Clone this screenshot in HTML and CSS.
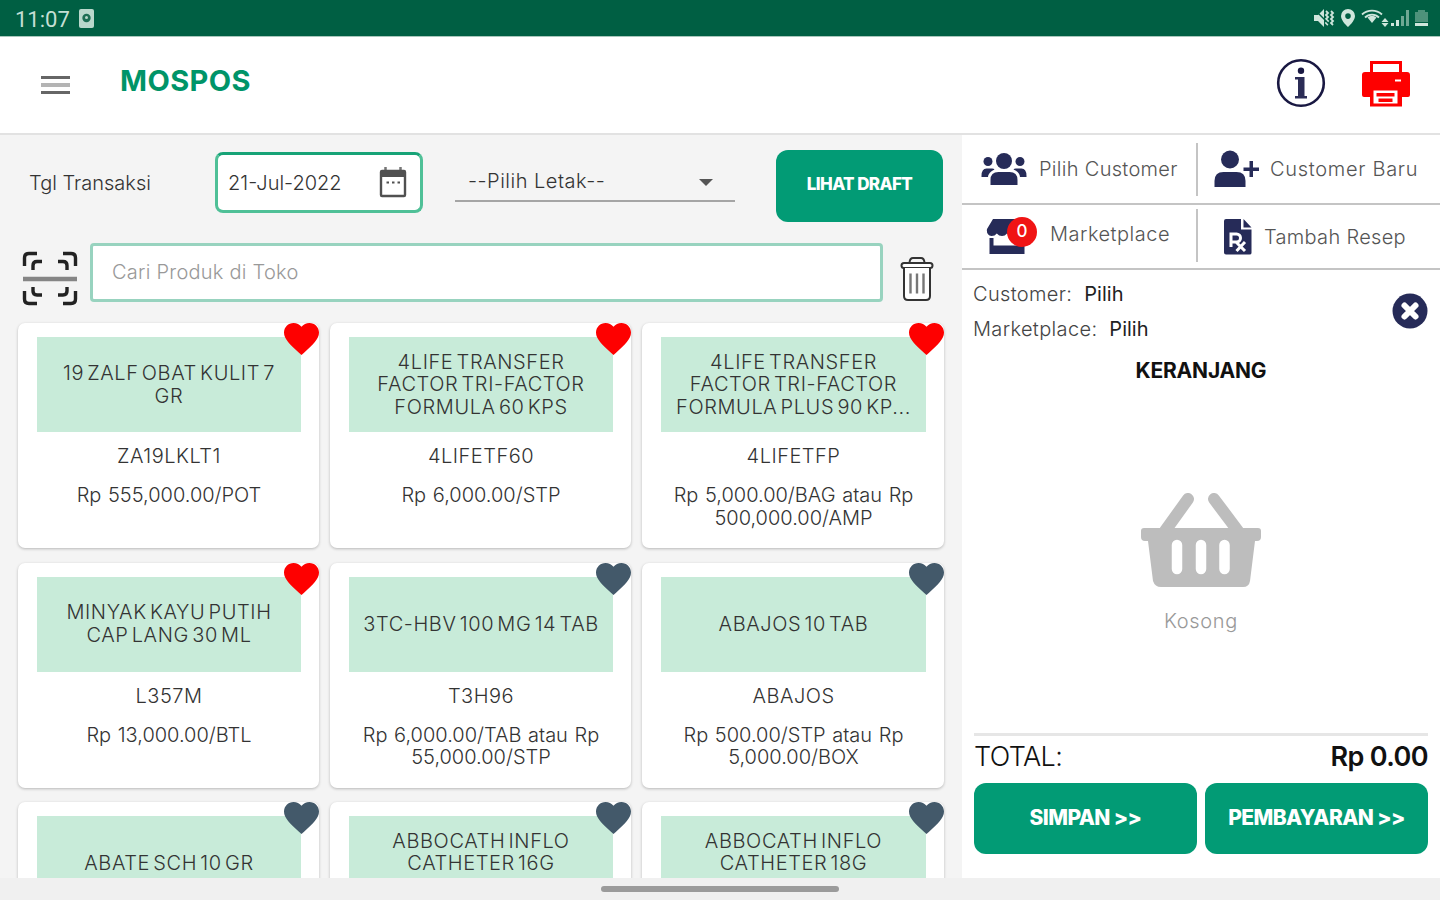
FILE: index.html
```html
<!DOCTYPE html>
<html lang="id">
	<head>
		<meta charset="utf-8">
		<title>MOSPOS</title>
		<link rel="stylesheet" href="styles.css">
	</head>
	<body>
		<svg class="defs">
			<symbol id="heart" viewBox="2 3 20 18.35" preserveAspectRatio="none">
				<path d="M12 21.35l-1.45-1.32C5.4 15.36 2 12.28 2 8.5 2 5.42 4.42 3 7.5 3c1.74 0 3.41.81 4.5 2.09C13.09 3.81 14.76 3 16.5 3 19.58 3 22 5.42 22 8.5c0 3.78-3.4 6.86-8.55 11.54L12 21.35z"/>
			</symbol>
		</svg>

		<div class="status">
			<span class="time">11:07</span>
			<svg class="st-app" width="15" height="19" viewBox="0 0 15 19">
				<rect width="15" height="19" rx="2" fill="#b9d8cc"/>
				<circle cx="7.5" cy="9" r="4.2" fill="#1d6e54"/>
				<circle cx="7.5" cy="8.6" r="1.5" fill="#b9d8cc"/>
			</svg>
			<svg class="st-icons" width="116" height="20" viewBox="0 0 116 20">
				<g fill="#cfe6dc" stroke="none">
					<path d="M1 7h4l6-6v18l-6-6H1z"/>
					<path d="M35 1a7 7 0 0 0-7 7c0 5 7 11 7 11s7-6 7-11a7 7 0 0 0-7-7zm0 4.300a2.800 2.800 0 1 1 0 5.600 2.800 2.800 0 0 1 0-5.600z"/>
					<path d="M54.500 9.500L59 15l4.500-5.500a7 7 0 0 0-9 0z"/>
					<path d="M72 10l3.500 4h-7zM72 19l-3.500-4h7z"/>
					<path d="M78 15h3v3h-3zM83 12h3v6h-3z"/>
				</g>
				<g fill="#6fa893">
					<path d="M88 8h3v10h-3zM93 2h3v16h-3z"/>
					<path d="M105 2h7v2h3v10h-13V4h3z" opacity=".7"/>
				</g>
				<path d="M102 15h13v3h-13z" fill="#cfe6dc"/>
				<g fill="none" stroke="#cfe6dc" stroke-width="1.800">
					<path d="M13 3l2 2-2 2 2 2-2 2 2 2-2 2 2 2M18 3l2 2-2 2 2 2-2 2 2 2-2 2 2 2"/>
					<path d="M49 6.500a15 15 0 0 1 20 0M52 9.500a10 10 0 0 1 14 0"/>
				</g>
				<path d="M1 1l18 18" stroke="#005f43" stroke-width="1.500"/>
			</svg>
		</div>

		<div class="header">
			<div class="burger"><i></i><i></i><i></i></div>
			<h1>MOSPOS</h1>
			<svg class="info" width="50" height="50" viewBox="0 0 50 50">
				<circle cx="25" cy="25" r="22.800" fill="none" stroke="#191842" stroke-width="2.600"/>
				<circle cx="25" cy="12.800" r="3.200" fill="#191842"/>
				<path d="M19 19h9.500v19H31v2.500H19V38h3V21.500h-3z" fill="#2b2c56"/>
			</svg>
			<svg class="printer" width="50" height="48" viewBox="0 0 50 48">
				<path d="M10.500 13V2.500h29V13" fill="none" stroke="#fe0000" stroke-width="3"/>
				<path d="M4 12h42a3 3 0 0 1 3 3v20a2 2 0 0 1-2 2h-6v9.500H9V37H3a2 2 0 0 1-2-2V15a3 3 0 0 1 3-3z" fill="#fe0000"/>
				<path d="M12.500 30.500h24v13h-24z" fill="#fff"/>
				<path d="M15.500 33h18v3.500h-18zM17.500 38.500h14V42h-14z" fill="#fe0000"/>
				<path d="M34 20.500h6" stroke="#fff" stroke-width="2"/>
			</svg>
		</div>

		<div class="main">
			<div class="left">
				<div class="filter">
					<label class="t-date">Tgl Transaksi</label>
					<div class="date">
						<span>21-Jul-2022</span>
						<svg width="28" height="31" viewBox="0 0 28 31">
							<path d="M6.500 0v4M21.500 0v4" stroke="#777" stroke-width="2.500"/>
							<rect x="2" y="4" width="24" height="25" rx="1" fill="none" stroke="#505050" stroke-width="2.400"/>
							<path d="M2 3h24v7H2z" fill="#505050"/>
							<path d="M7.500 15.500h2.500M13 15.500h2.500M18.500 15.500h2.500" stroke="#505050" stroke-width="2.200"/>
						</svg>
					</div>
					<div class="select">
						<span>--Pilih Letak--</span>
						<i></i>
					</div>
					<button class="btn draft">LIHAT DRAFT</button>
				</div>

				<div class="search">
					<svg class="scan" width="56" height="56" viewBox="0 0 56 56">
						<g fill="none" stroke="#222" stroke-width="3.400">
							<path d="M2.500 15V7q0-4.500 4.500-4.500h8M41 2.500h8q4.500 0 4.500 4.500v8M53.500 40v8q0 4.500-4.500 4.500h-8M15 52.500H7q-4.500 0-4.500-4.500v-8"/>
							<path d="M11 19v-4.500q0-4 4-4h5M36 10.500h5q4 0 4 4V19M45 36v4q0 4-4 4h-5M20 44h-5q-4 0-4-4v-4"/>
						</g>
						<path d="M1 28h54" stroke="#858585" stroke-width="4.500"/>
					</svg>
					<div class="search-box">Cari Produk di Toko</div>
					<svg class="trash" width="34" height="46" viewBox="0 0 34 46">
						<g fill="none" stroke="#333" stroke-width="2">
							<path d="M9.500 6.500Q10 2 13 2h8q3 0 3.500 4.500"/>
							<rect x="1.500" y="7" width="31" height="5" rx="2.500" fill="#fff"/>
							<path d="M4 12v28q0 4 4 4h18q4 0 4-4V12" fill="#fff"/>
							<path d="M10.500 17.500v20M17 17.500v20M23.500 17.500v20" stroke="#777" stroke-width="2.400"/>
						</g>
					</svg>
				</div>

				<div class="products">
					<div class="card fav">
						<div class="name">19 ZALF OBAT KULIT 7<br>GR</div>
						<div class="code">ZA19LKLT1</div>
						<div class="price">Rp 555,000.00/POT</div>
						<svg class="heart"><use href="#heart"/></svg>
					</div>
					<div class="card fav">
						<div class="name">4LIFE TRANSFER<br>FACTOR TRI-FACTOR<br>FORMULA 60 KPS</div>
						<div class="code">4LIFETF60</div>
						<div class="price">Rp 6,000.00/STP</div>
						<svg class="heart"><use href="#heart"/></svg>
					</div>
					<div class="card fav">
						<div class="name">4LIFE TRANSFER<br>FACTOR TRI-FACTOR<br>FORMULA PLUS 90 KP...</div>
						<div class="code">4LIFETFP</div>
						<div class="price">Rp 5,000.00/BAG atau Rp<br>500,000.00/AMP</div>
						<svg class="heart"><use href="#heart"/></svg>
					</div>
					<div class="card fav">
						<div class="name">MINYAK KAYU PUTIH<br>CAP LANG 30 ML</div>
						<div class="code">L357M</div>
						<div class="price">Rp 13,000.00/BTL</div>
						<svg class="heart"><use href="#heart"/></svg>
					</div>
					<div class="card">
						<div class="name">3TC-HBV 100 MG 14 TAB</div>
						<div class="code">T3H96</div>
						<div class="price">Rp 6,000.00/TAB atau Rp<br>55,000.00/STP</div>
						<svg class="heart"><use href="#heart"/></svg>
					</div>
					<div class="card">
						<div class="name">ABAJOS 10 TAB</div>
						<div class="code">ABAJOS</div>
						<div class="price">Rp 500.00/STP atau Rp<br>5,000.00/BOX</div>
						<svg class="heart"><use href="#heart"/></svg>
					</div>
					<div class="card">
						<div class="name">ABATE SCH 10 GR</div>
						<svg class="heart"><use href="#heart"/></svg>
					</div>
					<div class="card">
						<div class="name long">ABBOCATH INFLO<br>CATHETER 16G</div>
						<svg class="heart"><use href="#heart"/></svg>
					</div>
					<div class="card">
						<div class="name long">ABBOCATH INFLO<br>CATHETER 18G</div>
						<svg class="heart"><use href="#heart"/></svg>
					</div>
				</div>
			</div>

			<div class="right">
				<div class="menu">
					<div class="item pick">
						<svg width="46" height="34" viewBox="0 0 46 34" fill="#262b58">
							<circle cx="23" cy="9" r="8"/>
							<circle cx="7" cy="9.500" r="4.500"/>
							<circle cx="39" cy="9.500" r="4.500"/>
							<path d="M9.500 33v-5q0-8 8-8h11q8 0 8 8v5zM.5 24q0-7.500 5-7.500h5.500q2 0 2.500 1-6 2.500-6.500 7.500H.5zM45.500 24q0-7.500-5-7.500H35q-2 0-2.500 1 6 2.500 6.500 7.500h6.500z"/>
						</svg>
						<span>Pilih Customer</span>
					</div>
					<div class="item new">
						<svg width="46" height="38" viewBox="0 0 46 38" fill="#262b58">
							<circle cx="16" cy="9.500" r="9"/>
							<path d="M.5 37v-6q0-9 9-9h13q9 0 9 9v6z"/>
							<path d="M35.500 11h3.500v6.500h6v3.500h-6v6h-3.500v-6h-6v-3.500h6z"/>
						</svg>
						<span>Customer Baru</span>
					</div>
					<div class="item market">
						<div class="shop">
							<svg width="42" height="36" viewBox="0 0 42 36" fill="#262b58">
								<path d="M7 0h28l6 10q1 6-4.500 7-3 0-5.200-2.500Q29 17 26 17t-5-2.500Q19 17 16 17t-5.200-2.500Q9 17 5.500 17 0 16 1 10z"/>
								<path d="M3.500 19h4v7.500h27V19h4v16h-35z"/>
							</svg>
							<em>0</em>
						</div>
						<span>Marketplace</span>
					</div>
					<div class="item resep">
						<svg width="28" height="36" viewBox="0 0 28 36">
							<path d="M0 2q0-2 2-2h15v10.500h10.500V34q0 1.500-2 1.500H2q-2 0-2-2zM19.500 0l8 8.500h-8z" fill="#262b58"/>
							<path d="M7 28V15h5.500a4 4 0 0 1 0 8H7M12 23l9 9M21 23l-8.500 9" fill="none" stroke="#fff" stroke-width="3"/>
						</svg>
						<span>Tambah Resep</span>
					</div>
				</div>

				<div class="who">
					<div>
						<p>Customer: <b>Pilih</b></p>
						<p>Marketplace: <b>Pilih</b></p>
					</div>
					<svg width="36" height="36" viewBox="0 0 36 36">
						<circle cx="18" cy="18" r="17.500" fill="#262b58"/>
						<path d="M12.500 12.500l11 11M23.500 12.500l-11 11" stroke="#fff" stroke-width="6" stroke-linecap="round"/>
					</svg>
				</div>
				<h2>KERANJANG</h2>

				<div class="empty">
					<svg width="122" height="96" viewBox="0 0 122 96">
						<path d="M48 6L25 38M74 6l24 32" fill="none" stroke="#bdbdbd" stroke-width="12" stroke-linecap="round"/>
						<path d="M4 35h114q3 0 3 3v6q0 4-4 4h-2l-5 40q-1 6-7 6H21q-6 0-8-6L8 48H5q-4 0-4-4v-6q0-3 3-3z" fill="#bdbdbd"/>
						<path d="M37 52v24M61 52v24M84.500 52v24" stroke="#fff" stroke-width="10.500" stroke-linecap="round"/>
					</svg>
					<p>Kosong</p>
				</div>

				<div class="total">
					<span>TOTAL:</span>
					<strong>Rp 0.00</strong>
				</div>
				<div class="actions">
					<button class="btn">SIMPAN &gt;&gt;</button>
					<button class="btn">PEMBAYARAN &gt;&gt;</button>
				</div>
			</div>
		</div>

		<div class="nav"><i></i></div>
	</body>
</html>
```
FILE: styles.css
```css
*{
	box-sizing: border-box;
}
body, h1, h2, p, button{
	margin: 0;
	padding: 0;
}
body{
	width: 1440px;
	height: 900px;
	overflow: hidden;
	display: flex;
	flex-direction: column;
	background: #f4f4f4;
	font-family: Inter, "Open Sans", sans-serif;
	font-weight: 300;
	font-size: 20px;
	color: #333;
	white-space: nowrap;
}
svg{
	display: block;
	flex: none;
}
em, i{
	font-style: normal;
}
.defs{
	position: absolute;
	width: 0;
	height: 0;
}
.status{
	height: 36px;
	flex: none;
	display: flex;
	align-items: center;
	padding: 0 11px 0 15px;
	background: #005f43;
}
.time{
	font-family: Roboto, sans-serif;
	font-size: 22px;
	font-weight: 400;
	color: #c5dfd4;
	margin-top: 3px;
}
.st-app{
	margin-left: 9px;
}
.st-icons{
	margin-left: auto;
}
.header{
	height: 97px;
	flex: none;
	display: flex;
	align-items: flex-start;
	padding: 0 29px 0 41px;
	background: #fff;
	border-top: 1px solid #a9c7bc;
}
.burger{
	width: 29px;
	margin-top: 39px;
	display: flex;
	flex-direction: column;
	gap: 4px;
}
.burger i{
	height: 3px;
	background: #666;
}
.burger i:nth-child(2){
	height: 4px;
	background: #b4b4b4;
}
h1{
	margin: 25px 0 0 50px;
	font-size: 29px;
	line-height: 38px;
	font-weight: 700;
	letter-spacing: 0.4px;
	color: #009468;
}
.info{
	margin: 21px 0 0 auto;
}
.printer{
	margin: 23px 0 0 35px;
}
.main{
	height: 745px;
	flex: none;
	display: flex;
	border-top: 2px solid #e2e2e2;
}
.left{
	width: 962px;
	padding: 15px 18px 0;
	overflow: hidden;
}
.filter{
	height: 72px;
	display: flex;
	align-items: flex-start;
}
.t-date{
	width: 197px;
	padding-left: 11px;
	line-height: 66px;
}
.date{
	width: 208px;
	height: 61px;
	margin-top: 2px;
	padding: 0 13px 0 10px;
	display: flex;
	align-items: center;
	justify-content: space-between;
	background: #fff;
	border: 3px solid #4fc097;
	border-top-color: #17a377;
	border-radius: 8px;
}
.select{
	width: 280px;
	height: 52px;
	margin-left: 32px;
	padding: 11px 22px 0 13px;
	display: flex;
	justify-content: space-between;
	border-bottom: 2px solid #a5a5a5;
}
.select span{
	line-height: 40px;
	letter-spacing: 0.5px;
}
.select i{
	margin-top: 18px;
	height: 7px;
	border: 7px solid transparent;
	border-top-color: #555;
	border-bottom: 0;
}
.btn{
	border: none;
	background: #029b75;
	border-radius: 12px;
	color: #fff;
	font-family: Inter, sans-serif;
	font-weight: 800;
}
.draft{
	width: 167px;
	height: 72px;
	margin-left: 41px;
	padding-bottom: 5px;
	font-size: 17px;
	letter-spacing: -0.6px;
}
.search{
	height: 59px;
	margin-top: 21px;
	display: flex;
}
.scan{
	margin: 8px 0 0 4px;
}
.search-box{
	width: 793px;
	margin-left: 12px;
	padding-left: 19px;
	line-height: 53px;
	background: #fff;
	border: 3px solid #98d3bf;
	border-radius: 4px;
	letter-spacing: 0.25px;
	color: #999;
}
.trash{
	margin: 13px 0 0 17px;
}
.products{
	margin-top: 21px;
	display: grid;
	grid-template-columns: 301px 301px 302px;
	grid-auto-rows: 225px;
	gap: 14.5px 11px;
	text-align: center;
}
.card{
	position: relative;
	padding: 14px 18px 0 19px;
	background: #fff;
	border-radius: 7px;
	box-shadow: 0 1px 3px rgba(0,0,0,0.25);
}
.name{
	height: 95px;
	display: flex;
	flex-direction: column;
	justify-content: center;
	background: #c8ebd9;
	line-height: 22.6px;
	letter-spacing: 0.6px;
	word-spacing: -3px;
}
.long{
	padding-bottom: 22.6px;
}
.code{
	margin-top: 13px;
	line-height: 23px;
	letter-spacing: 0.5px;
}
.price{
	margin: 16px -10px 0;
	line-height: 22.6px;
	word-spacing: 1px;
}
.heart{
	position: absolute;
	top: 0;
	right: 0;
	width: 35px;
	height: 32px;
	fill: #43596a;
}
.fav .heart{
	fill: #fe0000;
}
.right{
	width: 478px;
	background: #fff;
}
.menu{
	display: grid;
	grid-template-columns: 236px 242px;
	grid-template-rows: 70px 65px;
}
.item{
	position: relative;
	display: flex;
	align-items: center;
	border-bottom: 2px solid #c4c4c4;
	letter-spacing: 0.3px;
	color: #555;
}
.item:nth-child(odd):after{
	content: "";
	position: absolute;
	right: 0;
	top: 8px;
	width: 2px;
	height: 53px;
	background: #c4c4c4;
}
.item:nth-child(3):after{
	top: 4px;
}
.pick{
	padding-left: 19px;
}
.pick span{
	margin-left: 12px;
}
.new{
	padding-left: 16px;
	letter-spacing: 0.7px;
}
.new span{
	margin-left: 10px;
}
.market{
	padding-left: 24px;
	letter-spacing: 0.5px;
}
.market span{
	margin: -6px 0 0 22px;
}
.shop{
	position: relative;
}
.shop em{
	position: absolute;
	left: 21px;
	top: -2px;
	width: 30px;
	height: 30px;
	border-radius: 50%;
	background: #f01414;
	color: #fff;
	font-size: 17px;
	font-weight: 500;
	letter-spacing: 0;
	line-height: 29px;
	text-align: center;
}
.resep{
	padding-left: 26px;
}
.resep span{
	margin-left: 12px;
}
.who{
	height: 78px;
	display: flex;
	justify-content: space-between;
	padding: 7px 12px 0 11px;
	line-height: 35px;
	letter-spacing: 0.35px;
	color: #444;
}
.who b{
	font-weight: 400;
	margin-left: 6px;
	letter-spacing: 0;
	color: #222;
}
.who svg{
	margin-top: 16px;
}
h2{
	line-height: 45px;
	font-size: 21px;
	font-weight: 700;
	letter-spacing: -0.2px;
	text-align: center;
	color: #111;
}
.empty{
	height: 340px;
	padding-top: 100px;
	display: flex;
	flex-direction: column;
	align-items: center;
	color: #999;
}
.empty p{
	margin-top: 19px;
	line-height: 26px;
	letter-spacing: 0.7px;
}
.total{
	height: 50px;
	margin: 0 12px;
	display: flex;
	justify-content: space-between;
	border-top: 3px solid #e6e6e6;
	line-height: 42px;
	font-size: 27px;
	letter-spacing: -0.6px;
	color: #111;
}
.total strong{
	font-weight: 600;
}
.actions{
	display: flex;
	gap: 8px;
	padding: 0 12px;
}
.actions .btn{
	width: 223px;
	height: 71px;
	padding-bottom: 3px;
	font-size: 21px;
	letter-spacing: -0.6px;
}
.nav{
	height: 22px;
	flex: none;
	display: flex;
	justify-content: center;
	background: #f0f0f0;
}
.nav i{
	width: 238px;
	height: 6px;
	margin-top: 8px;
	border-radius: 3px;
	background: #9b9b9b;
}
```
